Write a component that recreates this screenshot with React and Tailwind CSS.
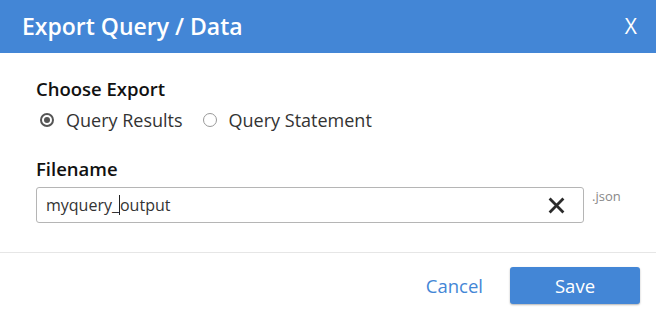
import React from "react";

const font = { fontFamily: '"Open Sans", "Noto Sans", sans-serif' };

const App = () => {
  return (
    <div className="w-[656px] h-[318px] bg-white flex flex-col" style={font}>
      {/* Header */}
      <div className="h-[53px] bg-[#4386d6] flex items-center justify-between pl-[22px] pr-[19px] text-white">
        <h2 className="text-[23px] font-semibold leading-none pb-[1px]">Export Query / Data</h2>
        <button className="text-[21px] leading-none">X</button>
      </div>

      {/* Body */}
      <div className="flex flex-col pl-[36px] pr-[33px] pt-[23px] h-[200px] border-b border-[#e6e6e6]">
        <h3 className="text-[18.5px] font-semibold text-[#111] leading-[26px]">Choose Export</h3>
        <div className="flex items-center mt-[6px] ml-[4px] text-[18px] text-[#333] leading-[24px]">
          <label className="flex items-center gap-[12px]">
            <span className="w-[14px] h-[14px] rounded-full border-2 border-[#555] flex items-center justify-center">
              <span className="w-[6px] h-[6px] rounded-full bg-[#555]" />
            </span>
            Query Results
          </label>
          <label className="flex items-center gap-[12px] ml-[20px]">
            <span className="w-[14px] h-[14px] rounded-full border border-[#999]" />
            Query Statement
          </label>
        </div>

        <h3 className="text-[18.5px] font-semibold text-[#111] leading-[26px] mt-[24px]">Filename</h3>
        <div className="flex items-start mt-[5px] gap-[8px]">
          <div className="w-[548px] h-[36px] border border-[#b5b5b5] rounded-[3px] flex items-center justify-between pl-[9px] pr-[18px]">
            <span className="text-[16px] text-[#333] flex items-center">
              myquery_
              <span className="inline-block w-px h-[20px] bg-[#222]" />
              output
            </span>
            <svg width="17" height="17" viewBox="0 0 16 16" className="text-[#2b2b2b]">
              <path d="M1.5 1.5 L14.5 14.5 M14.5 1.5 L1.5 14.5" stroke="currentColor" strokeWidth="2.6" />
            </svg>
          </div>
          <span className="text-[13px] text-[#888]">.json</span>
        </div>
      </div>

      {/* Footer */}
      <div className="flex-1 flex items-center justify-end pr-[16px] gap-[27px]">
        <button className="text-[18.5px] text-[#4386d6]">Cancel</button>
        <button className="w-[130px] h-[37px] rounded-[3px] bg-[#4386d6] text-white text-[18.5px] shadow-[0_1px_2px_rgba(0,0,0,0.3)]">
          Save
        </button>
      </div>
    </div>
  );
};

export default App;
